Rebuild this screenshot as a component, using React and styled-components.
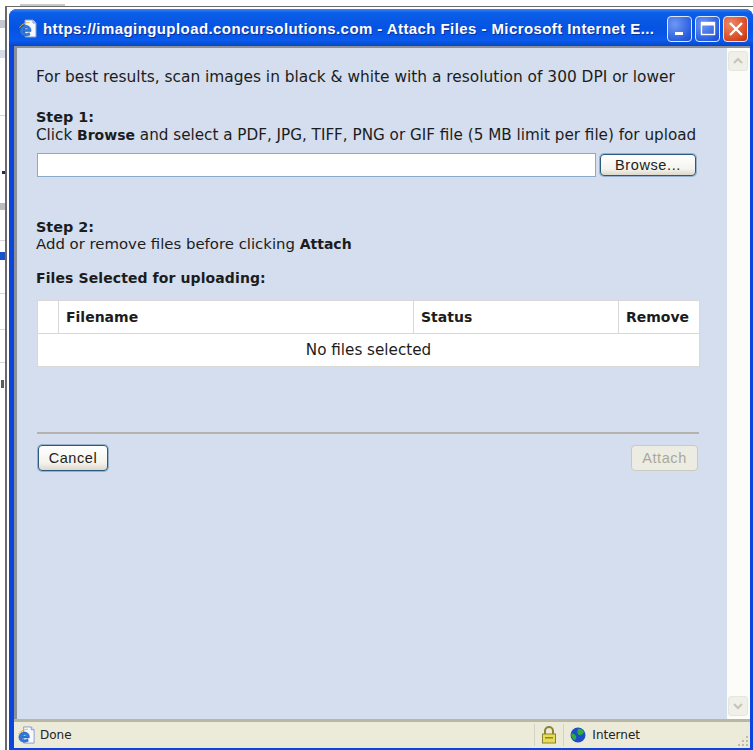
import styled, { createGlobalStyle } from "styled-components";

const GlobalStyle = createGlobalStyle`
  html, body {
    margin: 0;
    padding: 0;
    background: #fff;
  }
  body {
    font-family: "DejaVu Sans", Verdana, sans-serif;
    color: #1c1c1c;
  }
`;

// bits of the page behind the popup that stick out on the left and along the top
const Screen = styled.div`
  width: 753px;
  height: 750px;
  padding: 6px 0 0 5px;
  box-sizing: border-box;
  overflow: hidden;
  background-color: #fff;
  background-repeat: no-repeat;
  background-image:
    linear-gradient(#c4c8cc, #c4c8cc),
    linear-gradient(#d6dde6, #d6dde6),
    linear-gradient(#d4d8dc, #d4d8dc),
    linear-gradient(#1c2c4c, #1c2c4c),
    linear-gradient(#b8bcc0, #b8bcc0),
    linear-gradient(#d4d8dc, #d4d8dc),
    linear-gradient(#1a50c8, #1a50c8),
    linear-gradient(#d4d8dc, #d4d8dc),
    linear-gradient(#d4d8dc, #d4d8dc),
    linear-gradient(#d4d8dc, #d4d8dc),
    linear-gradient(#5c5c60, #5c5c60),
    linear-gradient(#c8c8c8, #c8c8c8);
  background-size:
    5px 8px, 5px 8px, 5px 1px, 3px 3px, 5px 7px, 5px 1px,
    5px 8px, 5px 1px, 5px 1px, 5px 1px, 3px 8px, 45px 2px;
  background-position:
    0 20px, 0 50px, 0 115px, 2px 171px, 0 203px, 0 240px,
    0 252px, 0 293px, 0 329px, 0 362px, 1px 380px, 20px 4px;
`;

const Frame = styled.div`
  height: 100%;
  padding: 2px 0 0 2px;
  box-sizing: border-box;
  background: #fff;
  border-top: 1px solid #6a6a6a;
  border-left: 2px solid #6a6a6a;
`;

const Window = styled.div`
  height: 100%;
  display: flex;
  flex-direction: column;
  padding: 0 3px 2px 5px;
  box-sizing: border-box;
  background: #0a46dc;
  border-radius: 8px 8px 0 0;
`;

const TitleBar = styled.div`
  flex: none;
  height: 37px;
  box-sizing: border-box;
  display: flex;
  align-items: center;
  margin: 0 -3px 0 -5px;
  padding: 2px 5px 0 9px;
  background: linear-gradient(#3a86f2 0, #0c5ee8 10%, #0553e2 50%, #0a5aec 85%, #0548c8 100%);
  border-radius: 8px 8px 0 0;
`;

const TitleText = styled.div`
  flex: 1;
  min-width: 0;
  margin-left: 5px;
  font-family: "Liberation Sans", Arial, sans-serif;
  font-size: 15px;
  font-weight: 700;
  letter-spacing: 0.42px;
  color: #fff;
  white-space: nowrap;
  text-shadow: 1px 1px 0 #0a2f9a;
`;

const WinButton = styled.div`
  flex: none;
  width: 25px;
  height: 26px;
  margin-left: 3px;
  box-sizing: border-box;
  display: flex;
  align-items: center;
  justify-content: center;
  border: 1px solid #dfe8ff;
  border-radius: 4px;
  background: ${(p) =>
    p.$close
      ? "radial-gradient(circle at 30% 30%, #ee8a6a, #d8481f 70%, #b5330f)"
      : "radial-gradient(circle at 30% 30%, #6f97f2, #2a5fe0 70%, #1d49c4)"};
`;

const Body = styled.div`
  flex: 1;
  min-height: 0;
  display: flex;
  border-left: 3px solid #8a8f98;
  border-top: 2px solid #8a8f98;
`;

const Content = styled.div`
  flex: 1;
  min-width: 0;
  display: flex;
  flex-direction: column;
  padding: 21px 29px 0 19px;
  background: #d4deee;
  font-size: 15.2px;
  line-height: 17px;
`;

const Scrollbar = styled.div`
  flex: none;
  width: 23px;
  display: flex;
  flex-direction: column;
  justify-content: space-between;
  padding: 3px 0 3px 1px;
  box-sizing: border-box;
  background: #fcfcf8;
`;

const ScrollButton = styled.div`
  width: 18px;
  height: 18px;
  display: flex;
  align-items: center;
  justify-content: center;
  border: 1px solid #e6e6de;
  border-radius: 3px;
  background: #f0f0e8;
`;

const Note = styled.p`
  margin: 0 0 23px;
  font-size: 15.4px;
  white-space: nowrap;
`;

const StepTitle = styled.div`
  font-size: 14.4px;
  font-weight: 700;
`;

const StepText = styled.div`
  margin-top: ${(p) => p.$gap || 0}px;
  font-size: ${(p) => p.$size || 15.2}px;
  white-space: nowrap;
  b {
    font-size: 14px;
  }
`;

const FilePicker = styled.div`
  display: flex;
  align-items: center;
  gap: 4px;
  margin: 9px 0 0 1px;
`;

const PathInput = styled.div`
  width: 559px;
  height: 24px;
  box-sizing: border-box;
  background: #fff;
  border: 1px solid #8aaac8;
`;

const XpButton = styled.button`
  height: ${(p) => p.$height || 26}px;
  padding: 0;
  width: ${(p) => p.$width}px;
  box-sizing: border-box;
  font: 14.5px "Liberation Sans", Arial, sans-serif;
  letter-spacing: 0.6px;
  color: ${(p) => (p.disabled ? "#a8a89c" : "#222")};
  border: 1px solid ${(p) => (p.disabled ? "#c8ccc0" : "#2a5a80")};
  border-radius: 4px;
  box-shadow: ${(p) => (p.disabled ? "none" : "0 0 0 1px rgba(60, 110, 150, 0.4)")};
  background: ${(p) => (p.disabled ? "#edece2" : "linear-gradient(#fff, #f4f3ec 70%, #dcd8cc)")};
`;

const SectionGap = styled.div`
  height: 42px;
`;

const TableLabel = styled.div`
  font-size: 14px;
  letter-spacing: 0.1px;
  font-weight: 700;
  margin: 17px 0 13px;
`;

const FilesTable = styled.table`
  width: 662px;
  margin-left: 1px;
  border-collapse: collapse;
  background: #fff;
  table-layout: fixed;
  border: 1px solid #d8d8d8;
  th,
  td {
    height: 33px;
    padding: 0 7px;
    box-sizing: border-box;
    border: 1px solid #d8d8d8;
    font-size: 14px;
    text-align: left;
  }
  td {
    font-size: 15.2px;
    text-align: center;
  }
`;

const Divider = styled.hr`
  width: 662px;
  margin: 65px 0 11px 1px;
  border: none;
  border-top: 2px solid #b4b4ac;
`;

const Actions = styled.div`
  width: 660px;
  margin-left: 2px;
  display: flex;
  justify-content: space-between;
  align-items: center;
`;

const StatusBar = styled.div`
  flex: none;
  height: 29px;
  box-sizing: border-box;
  display: flex;
  align-items: center;
  padding-left: 3px;
  background: #ecead8;
  border-top: 3px solid #b8b6a4;
  font-size: 12px;
  color: #222;
`;

const StatusText = styled.div`
  flex: 1;
  margin-left: 4px;
`;

const StatusCell = styled.div`
  display: flex;
  align-items: center;
  gap: 6px;
  height: 22px;
  padding: 0 6px;
  border-left: 1px solid #d4d2c0;
`;

const Grip = styled.div`
  width: 104px;
  align-self: flex-end;
  display: flex;
  justify-content: flex-end;
  padding: 0 1px 1px 0;
  box-sizing: border-box;
`;

// IE page icon: white sheet with a folded corner and the blue "e"
function IePage({ size = 20 }) {
  return (
    <svg width={size} height={size} viewBox="0 0 20 20">
      <path d="M7 1h8l3 3v14H7z" fill="#f6f9ff" stroke="#8a9cc8" />
      <path d="M15 1v3h3" fill="#cfdcf4" stroke="#8a9cc8" />
      <path
        d="M13 12.5H5.5c.3 2 2.8 2.800 5.700 1l.8 2.500c-4.500 2.400-9.800.8-10-3.800C1.800 8 5.800 5.600 9 6.400c2.800.7 4.400 3 4 6.100zM5.600 10.500h4.200C9.600 8.700 6 8.600 5.600 10.500z"
        fill="#2f78dc"
        stroke="#1c54b0"
        strokeWidth=".5"
      />
      <path d="M1.500 8.500C4 5 9 3 11.500 3.500" fill="none" stroke="#e8b040" strokeWidth="1" />
    </svg>
  );
}

function Minimize() {
  return (
    <svg width="14" height="14" viewBox="0 0 14 14">
      <rect x="2" y="10" width="8" height="3" fill="#fff" />
    </svg>
  );
}

function Maximize() {
  return (
    <svg width="16" height="16" viewBox="0 0 16 16">
      <rect x="1.500" y="1.500" width="13" height="12" fill="none" stroke="#fff" strokeWidth="1.400" />
      <rect x="1.500" y="1.500" width="13" height="3" fill="#fff" />
    </svg>
  );
}

function CloseCross() {
  return (
    <svg width="16" height="16" viewBox="0 0 16 16">
      <path d="M2 2l12 12M14 2L2 14" stroke="#fff" strokeWidth="2.400" />
    </svg>
  );
}

function Chevron({ down }) {
  return (
    <svg width="12" height="10" viewBox="0 0 12 10">
      <path d={down ? "M2 3l4 4 4-4" : "M2 7l4-4 4 4"} fill="none" stroke="#c4c4ba" strokeWidth="2" />
    </svg>
  );
}

function Padlock() {
  return (
    <svg width="16" height="20" viewBox="0 0 16 20">
      <path d="M4 9V6a4 4 0 018 0v3" fill="none" stroke="#8a8430" strokeWidth="2" />
      <rect x="1.500" y="9" width="13" height="9" fill="#e8dc50" stroke="#8a8430" />
      <rect x="4" y="12" width="8" height="1.500" fill="#8a8430" />
    </svg>
  );
}

function Globe() {
  return (
    <svg width="16" height="16" viewBox="0 0 16 16">
      <circle cx="8" cy="8" r="7.500" fill="#1e4cc8" />
      <path d="M1 7c2-1 4 0 5 2s-1 5-2 4-3-3-3-6zM8 2c2-1 5 1 6 3-1 2-3 4-5 3s-2-4-1-6z" fill="#2bb032" />
    </svg>
  );
}

function ResizeGrip() {
  return (
    <svg width="13" height="13" viewBox="0 0 13 13" fill="#bdbbaa">
      <rect x="10" y="2" width="2" height="2" />
      <rect x="6" y="6" width="2" height="2" />
      <rect x="10" y="6" width="2" height="2" />
      <rect x="2" y="10" width="2" height="2" />
      <rect x="6" y="10" width="2" height="2" />
      <rect x="10" y="10" width="2" height="2" />
    </svg>
  );
}

export default function App() {
  return (
    <>
      <GlobalStyle />
      <Screen>
        <Frame>
          <Window>
            <TitleBar>
              <IePage />
              <TitleText>https://imagingupload.concursolutions.com - Attach Files - Microsoft Internet E...</TitleText>
              <WinButton>
                <Minimize />
              </WinButton>
              <WinButton>
                <Maximize />
              </WinButton>
              <WinButton $close>
                <CloseCross />
              </WinButton>
            </TitleBar>
            <Body>
              <Content>
                <Note>For best results, scan images in black &amp; white with a resolution of 300 DPI or lower</Note>
                <StepTitle>Step 1:</StepTitle>
                <StepText $gap={1}>
                  Click <b>Browse</b> and select a PDF, JPG, TIFF, PNG or GIF file (5 MB limit per file) for upload
                </StepText>
                <FilePicker>
                  <PathInput />
                  <XpButton $width={96} $height={22}>Browse...</XpButton>
                </FilePicker>
                <SectionGap />
                <StepTitle>Step 2:</StepTitle>
                <StepText $size={14.9}>
                  Add or remove files before clicking <b>Attach</b>
                </StepText>
                <TableLabel>Files Selected for uploading:</TableLabel>
                <FilesTable>
                  <colgroup>
                    <col width="21" />
                    <col width="355" />
                    <col width="205" />
                    <col width="81" />
                  </colgroup>
                  <thead>
                    <tr>
                      <th />
                      <th>Filename</th>
                      <th>Status</th>
                      <th>Remove</th>
                    </tr>
                  </thead>
                  <tbody>
                    <tr>
                      <td colSpan="4">No files selected</td>
                    </tr>
                  </tbody>
                </FilesTable>
                <Divider />
                <Actions>
                  <XpButton $width={70}>Cancel</XpButton>
                  <XpButton $width={67} disabled>Attach</XpButton>
                </Actions>
              </Content>
              <Scrollbar>
                <ScrollButton>
                  <Chevron />
                </ScrollButton>
                <ScrollButton>
                  <Chevron down />
                </ScrollButton>
              </Scrollbar>
            </Body>
            <StatusBar>
              <IePage size={19} />
              <StatusText>Done</StatusText>
              <StatusCell>
                <Padlock />
              </StatusCell>
              <StatusCell>
                <Globe />
                Internet
              </StatusCell>
              <Grip>
                <ResizeGrip />
              </Grip>
            </StatusBar>
          </Window>
        </Frame>
      </Screen>
    </>
  );
}
